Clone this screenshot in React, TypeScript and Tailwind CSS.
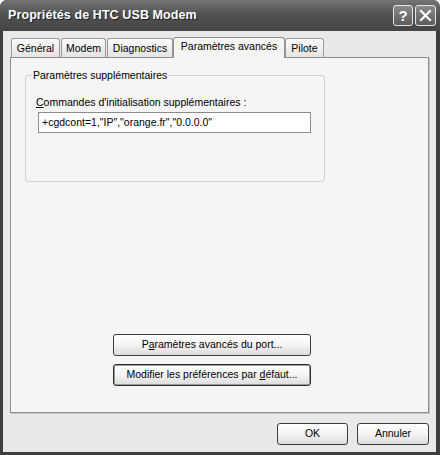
import React from 'react';

const ui = { fontFamily: '"Liberation Sans", Arial, sans-serif' };

function Tab({ label, width, active }: { label: string; width: string; active?: boolean }) {
  if (active) {
    return (
      <div
        className={`${width} h-[21px] -mb-px relative z-10 flex items-center justify-center rounded-t-[3px] border border-b-0 border-[#8e8e8e] bg-[#f5f5f5] text-[10.5px] text-black`}
      >
        <span className="-mt-[2px]">{label}</span>
      </div>
    );
  }
  return (
    <div
      className={`${width} h-[19px] flex items-center justify-center rounded-t-[3px] border border-b-0 border-[#9a9a9a] bg-gradient-to-b from-[#fbfbfb] to-[#e4e4e4] text-[10.5px] text-black`}
    >
      <span className="mt-[1px]">{label}</span>
    </div>
  );
}

function XpButton({ children, width, strong }: { children: React.ReactNode; width: string; strong?: boolean }) {
  return (
    <div
      className={`${width} h-[22px] flex items-center justify-center rounded-[3px] border ${
        strong ? 'border-[#2e2e2e] shadow-[inset_0_0_0_1px_#9a9a9a]' : 'border-[#3c3c3c]'
      } bg-gradient-to-b from-[#ffffff] via-[#f4f4f4] to-[#dcdcdc] text-[10.5px] text-black`}
    >
      {children}
    </div>
  );
}

export default function App() {
  return (
    <div className="w-[440px] h-[455px] flex flex-col bg-[#3e3e3e] rounded-t-[7px] overflow-hidden" style={ui}>
      {/* title bar */}
      <div className="h-[31px] flex items-center justify-between pl-[8px] pr-[4px] bg-gradient-to-b from-[#747474] via-[#505050] to-[#464646]">
        <span className="text-[12.5px] font-bold text-white [text-shadow:1px_1px_0_#1e1e1e] tracking-[0.1px]">
          Propriétés de HTC USB Modem
        </span>
        <div className="flex gap-[2px]">
          <div className="w-[20px] h-[21px] rounded-[3px] border border-[#e6e6e6] bg-gradient-to-b from-[#8a8a8a] to-[#5c5c5c] flex items-center justify-center text-white font-bold text-[15px] leading-none">
            ?
          </div>
          <div className="w-[21px] h-[21px] rounded-[3px] border border-[#e6e6e6] bg-gradient-to-b from-[#8a8a8a] to-[#5c5c5c] flex items-center justify-center">
            <svg width="13" height="13" viewBox="0 0 13 13">
              <path d="M2 2 L11 11 M11 2 L2 11" stroke="white" strokeWidth="2.2" strokeLinecap="square" />
            </svg>
          </div>
        </div>
      </div>

      {/* body */}
      <div className="flex-1 ml-[3px] mr-[4px] mb-[3px] bg-[#e9e9e9] pt-[6px] pl-[7px] pr-[7px] flex flex-col">
        <div className="flex items-end pl-[1px]">
          <Tab label="Général" width="w-[49px]" />
          <div className="ml-[1px]">
            <Tab label="Modem" width="w-[45px]" />
          </div>
          <div className="ml-[1px]">
            <Tab label="Diagnostics" width="w-[66px]" />
          </div>
          <Tab label="Paramètres avancés" width="w-[112px]" active />
          <Tab label="Pilote" width="w-[39px]" />
        </div>

        <div className="h-[356px] border border-[#8e8e8e] bg-[#f5f5f5] shadow-[1px_1px_0_#c4c4c4] flex flex-col">
          <fieldset className="ml-[14px] mt-[11px] w-[300px] h-[113px] border border-[#cfcfcf] rounded-[3px] px-[10px]">
            <legend className="-ml-[4px] px-[1px] text-[10.5px] leading-[13px] text-black">
              Paramètres supplémentaires
            </legend>
            <div className="mt-[14px] text-[10.5px] leading-[13px] text-black">
              <span className="underline underline-offset-[1px]">C</span>ommandes d'initialisation supplémentaires :
            </div>
            <div className="mt-[3px] ml-[2px] w-[273px] h-[21px] border border-[#8c8c8c] bg-white flex items-center pl-[3px] text-[10.5px] text-black">
              +cgdcont=1,"IP","orange.fr","0.0.0.0"
            </div>
          </fieldset>

          <div className="mt-[152px] ml-[102px] flex flex-col gap-[8px]">
            <XpButton width="w-[198px]">
              <span>
                P<span className="underline underline-offset-[1px]">a</span>ramètres avancés du port...
              </span>
            </XpButton>
            <XpButton width="w-[198px]" strong>
              <span>
                Modifier les préférences par <span className="underline underline-offset-[1px]">d</span>éfaut...
              </span>
            </XpButton>
          </div>
        </div>

        <div className="mt-[10px] flex justify-end gap-[9px]">
          <XpButton width="w-[71px]">OK</XpButton>
          <XpButton width="w-[72px]">Annuler</XpButton>
        </div>
      </div>
    </div>
  );
}
